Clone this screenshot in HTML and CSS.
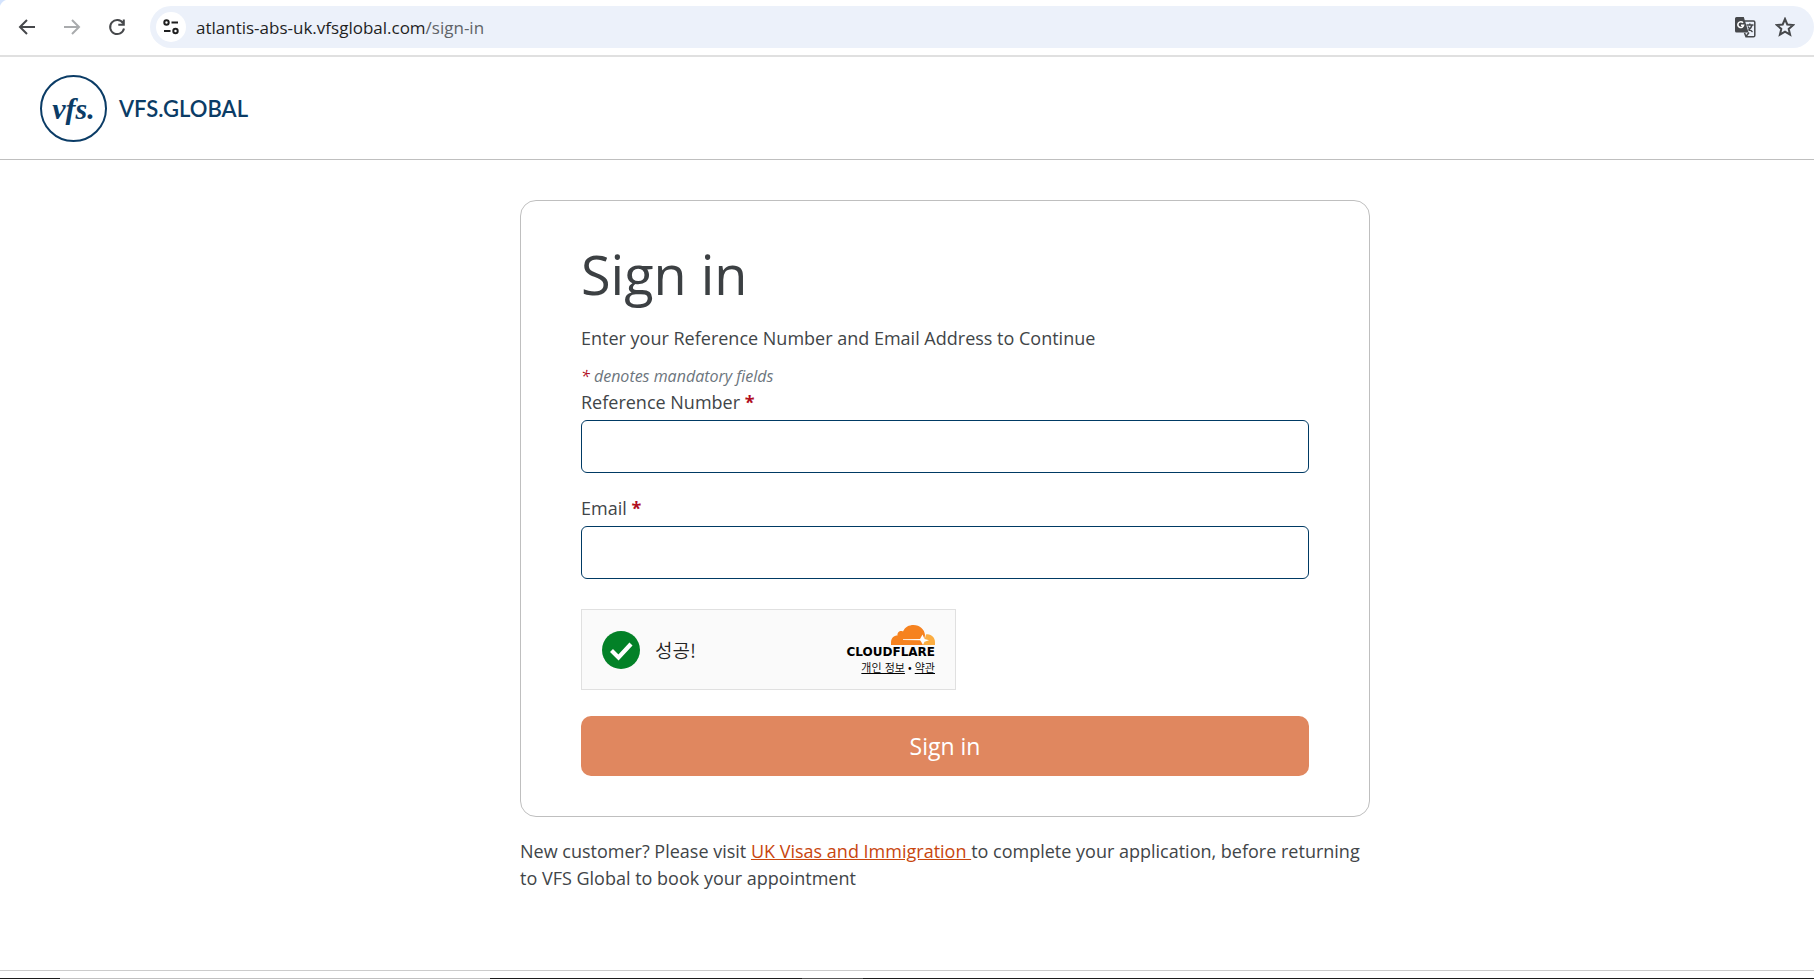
FILE: index.html
```html
<!DOCTYPE html>
<html lang="en">
<head>
<meta charset="utf-8">
<title>Sign in - VFS Global</title>
<link rel="stylesheet" href="styles.css">
</head>
<body>
<div class="toolbar">
  <button class="tool" type="button" aria-label="Back"><svg width="20" height="20" viewBox="0 0 20 20"><path d="M18 10H3.500M10 3L3 10l7 7"/></svg></button>
  <button class="tool tool-off" type="button" aria-label="Forward"><svg width="20" height="20" viewBox="0 0 20 20"><path d="M2 10h14.500M10 3l7 7-7 7"/></svg></button>
  <button class="tool" type="button" aria-label="Reload"><svg width="20" height="20" viewBox="0 0 20 20"><path d="M16 6.200A7 7 0 1 0 17 11.500M16.800 2.500v5.300h-5.500"/></svg></button>
  <div class="address">
    <button class="site-info" type="button" aria-label="View site information"><svg width="18" height="18" viewBox="0 0 18 18"><circle cx="4.500" cy="4.500" r="2.200"/><path d="M9.500 4.500H16M2 13h6.500"/><circle cx="13.500" cy="13" r="2.200"/></svg></button>
    <span class="url">atlantis-abs-uk.vfsglobal.com<span class="path">/sign-in</span></span>
    <button class="tool" type="button" aria-label="Translate this page"><svg class="translate" width="22" height="22" viewBox="0 0 22 22"><path class="solid" d="M2.500 1h7.300l4.700 15.500h-12A1.500 1.500 0 0 1 1 15V2.500A1.500 1.500 0 0 1 2.500 1z"/><path d="M10.500 5H19.500a1.300 1.300 0 0 1 1.300 1.300v13.200a1.300 1.300 0 0 1-1.300 1.300h-7.500l-1.500-4M12 20.500l3-4M12.500 9h7M15.800 7.500V9M18 9c-.5 2.500-2 4-3.500 5.500M14 10.500c1 2 2.500 4 4.500 5.500"/><path class="cut" d="M9 6.800A2.900 2.900 0 1 0 9.600 9.200H7"/></svg></button>
    <button class="tool" type="button" aria-label="Bookmark this tab"><svg width="20" height="20" viewBox="0 0 20 20"><path d="M10 2l2.300 5.500 6 .5-4.600 3.900 1.400 5.800L10 14.600l-5.100 3.100 1.400-5.800L1.700 8l6-.5z"/></svg></button>
  </div>
</div>
<header class="site-header">
  <a class="brand" href="#"><span class="brand-mark">vfs.</span><span class="brand-name">VFS.GLOBAL</span></a>
</header>
<main class="main">
  <div class="column">
    <form class="card">
      <h1 class="title">Sign in</h1>
      <p class="lead">Enter your Reference Number and Email Address to Continue</p>
      <p class="hint"><span class="star">*</span> denotes mandatory fields</p>
      <div class="field">
        <label for="reference">Reference Number <b class="star">*</b></label>
        <input id="reference" type="text">
      </div>
      <div class="field">
        <label for="email">Email <b class="star">*</b></label>
        <input id="email" type="email">
      </div>
      <div class="captcha" lang="ko">
        <svg width="38" height="38" viewBox="0 0 38 38"><circle cx="19" cy="19" r="19" fill="#038127"/><path d="M9.500 19.500l7 7L29 13" fill="none" stroke="#fff" stroke-width="4.200"/></svg>
        <span class="success">성공!</span>
        <div class="vendor">
          <svg width="44" height="20" viewBox="0 0 44 20"><path fill="#fbad41" d="M32 20l3-10.500c5-1 9 3 9 8V20z"/><path fill="#f6821f" d="M0 20v-2.500C0 13 3 10.500 6.500 10.500 6 7.500 9 5 12 6.500 14 2 18 0 22.500 0 29 0 33.500 4.500 34 10l-1.500 10z"/><path fill="#fff" d="M12 14.300l17-.3 2.500-4.500 2 4.500 4.500 1.300-4.500 1.500L32 20l-2-3.500-1-1.200-17-.2z"/></svg>
          <span class="vendor-name">CLOUDFLARE</span>
          <span class="vendor-links"><a href="#">개인 정보</a> • <a href="#">약관</a></span>
        </div>
      </div>
      <button class="submit" type="button">Sign in</button>
    </form>
    <p class="note">New customer? Please visit <a href="#">UK Visas and Immigration </a>to complete your application, before returning to VFS Global to book your appointment</p>
  </div>
</main>
<footer class="site-footer"></footer>
<div class="taskbar"></div>
</body>
</html>
```
FILE: styles.css
```css
* { box-sizing: border-box; }
body {
  margin: 0;
  min-height: 100vh;
  display: flex;
  flex-direction: column;
  background: #fff;
  color: #414548;
  font: 400 18px/27px "Open Sans", "Noto Sans CJK KR", sans-serif;
}
h1, p { margin: 0; }
button { padding: 0; border: 0; background: none; font: inherit; cursor: pointer; }

.toolbar {
  display: flex;
  align-items: center;
  height: 57px;
  padding: 0 0 1px 7px;
  border-bottom: 2px solid #e0e0e0;
  background: radial-gradient(circle at 9px 9px, #fff 9px, #d3e3fd 10px) 0 0 / 9px 9px no-repeat;
}
.tool { display: grid; place-items: center; width: 40px; height: 40px; margin-right: 5px; }
.tool svg, .site-info svg { fill: none; stroke: #46484b; stroke-width: 2; }
.tool-off svg { stroke: #a9abad; }
.address {
  flex: 1;
  display: flex;
  align-items: center;
  height: 42px;
  margin-left: 8px;
  padding-left: 6px;
  border-radius: 21px;
  background: #ecf1fa;
}
.address .tool { width: 40px; margin: 0; }
.address .tool:last-child { margin-right: 9px; }
.site-info { display: grid; place-items: center; width: 30px; height: 30px; border-radius: 50%; background: #fff; }
.site-info svg { stroke: #1f1f1f; }
.url { flex: 1; margin-left: 10px; font-size: 17px; color: #1f1f1f; }
.path { color: #5f6368; }
.tool .translate { stroke-width: 1.500; }
.translate .solid { fill: #46484b; stroke: none; }
.translate .cut { stroke: #fff; stroke-width: 1.600; }

.site-header { padding: 18px 40px 17px; border-bottom: 1px solid #bfbfbf; }
.brand { display: inline-flex; align-items: center; gap: 12px; color: #0b3c66; text-decoration: none; vertical-align: top; }
.brand-mark {
  display: grid;
  place-items: center;
  width: 67px;
  height: 67px;
  border: 2px solid #0b3c66;
  border-radius: 50%;
  font: italic bold 30px/30px "Liberation Serif", serif;
}
.brand-name { font: 600 22px/27px Lato, sans-serif; }

.main { flex: 1; padding: 40px 0 40px 76px; }
.column { max-width: 850px; margin: 0 auto; }
.card { padding: 37px 60px 40px; border: 1px solid #bfbfbf; border-radius: 16px; }
.title { font-size: 54px; line-height: 72px; font-weight: 400; color: #3c4043; }
.lead { margin-top: 15px; }
.hint { margin: 12px 0 1px; font-size: 16px; line-height: 24px; font-style: italic; color: #6c757d; }
.star { color: #b10e1e; }
.field { display: grid; gap: 4px; margin-bottom: 22px; }
.field input {
  width: 100%;
  height: 53px;
  padding: 0 16px;
  border: 1px solid #003a64;
  border-radius: 6px;
  font: inherit;
}
.captcha {
  display: flex;
  align-items: center;
  width: 375px;
  max-width: 100%;
  height: 81px;
  margin-top: 30px;
  padding: 0 20px;
  border: 1px solid #e0e0e0;
  background: #fafafa;
  color: #232323;
  font-family: "Noto Sans CJK KR", sans-serif;
  font-weight: 350;
}
.success { flex: 1; margin-left: 15px; font-size: 19px; }
.vendor { display: flex; flex-direction: column; align-items: flex-end; }
.vendor-name { font: bold 12px/14px "DejaVu Sans", sans-serif; color: #000; }
.vendor-links { font-size: 11px; line-height: 16px; color: #000; }
.vendor-links a { color: inherit; }
.submit {
  display: block;
  width: 100%;
  height: 60px;
  margin-top: 26px;
  border-radius: 10px;
  background: #e0875f;
  color: #fff;
  font-size: 23px;
}
.note { margin-top: 21px; }
.note a { color: #c8460e; }

.site-footer { height: 8px; border-top: 1px solid #ccc; }
.taskbar { height: 1px; background: linear-gradient(90deg, #1c1c1c 60px, #c0c0c0 60px 490px, #1c1c1c 490px 802px, #555 802px 863px, #1c1c1c 863px); }
```
